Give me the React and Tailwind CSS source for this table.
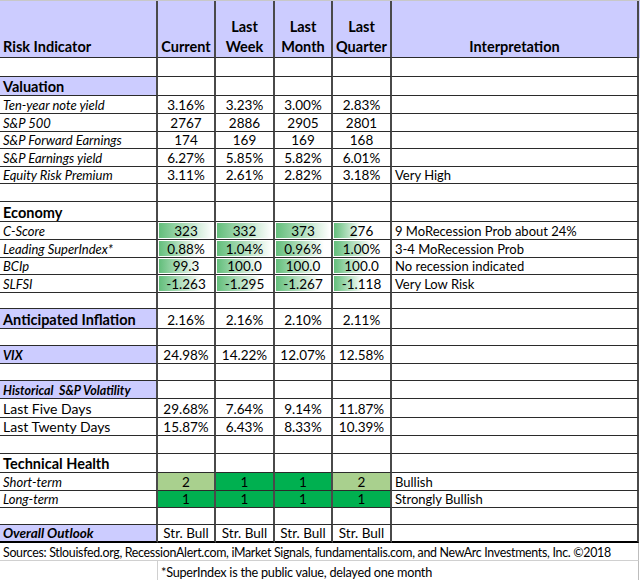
import React from 'react'

// Excel-style dashboard table
const G = '#00b050'
const LG = '#a9d08e'

const rows = [
  { h: 'h-[19px]' },
  { h: 'h-[19px]', label: 'Valuation', kind: 'sec', lav: true },
  { h: 'h-[18px]', label: 'Ten-year note yield', kind: 'it', vals: ['3.16%', '3.23%', '3.00%', '2.83%'] },
  { h: 'h-[18px]', label: 'S&P 500', kind: 'it', vals: ['2767', '2886', '2905', '2801'] },
  { h: 'h-[17px]', label: 'S&P Forward Earnings', kind: 'it', vals: ['174', '169', '169', '168'] },
  { h: 'h-[18px]', label: 'S&P Earnings yield', kind: 'it', vals: ['6.27%', '5.85%', '5.82%', '6.01%'] },
  { h: 'h-[17px]', label: 'Equity Risk Premium', kind: 'it', vals: ['3.11%', '2.61%', '2.82%', '3.18%'], note: 'Very High' },
  { h: 'h-[18px]' },
  { h: 'h-[20px]', label: 'Economy', kind: 'sec' },
  { h: 'h-[18px]', label: 'C-Score', kind: 'it', vals: ['323', '332', '373', '276'], bars: [100, 100, 100, 50], note: '9 MoRecession Prob about 24%' },
  { h: 'h-[18px]', label: 'Leading SuperIndex*', kind: 'it', vals: ['0.88%', '1.04%', '0.96%', '1.00%'], bars: [75, 100, 90, 70], note: '3-4 MoRecession Prob' },
  { h: 'h-[17px]', label: 'BCIp', kind: 'it', vals: ['99.3', '100.0', '100.0', '100.0'], bars: [75, 80, 80, 60], note: 'No recession indicated' },
  { h: 'h-[18px]', label: 'SLFSI', kind: 'it', vals: ['-1.263', '-1.295', '-1.267', '-1.118'], bars: [80, 80, 80, 55], note: 'Very Low Risk' },
  { h: 'h-[16px]' },
  { h: 'h-[20px]', label: 'Anticipated Inflation', kind: 'sec', lav: true, vals: ['2.16%', '2.16%', '2.10%', '2.11%'] },
  { h: 'h-[17px]' },
  { h: 'h-[18px]', label: 'VIX', kind: 'bi', lav: true, vals: ['24.98%', '14.22%', '12.07%', '12.58%'] },
  { h: 'h-[17px]' },
  { h: 'h-[18px]', label: 'Historical  S&P Volatility', kind: 'bi', lav: true },
  { h: 'h-[19px]', label: 'Last Five Days', kind: 'plain', vals: ['29.68%', '7.64%', '9.14%', '11.87%'] },
  { h: 'h-[18px]', label: 'Last Twenty Days', kind: 'plain', vals: ['15.87%', '6.43%', '8.33%', '10.39%'] },
  { h: 'h-[18px]' },
  { h: 'h-[19px]', label: 'Technical Health', kind: 'sec' },
  { h: 'h-[18px]', label: 'Short-term', kind: 'it', vals: ['2', '1', '1', '2'], fills: [LG, G, G, LG], note: 'Bullish' },
  { h: 'h-[17px]', label: 'Long-term', kind: 'it', vals: ['1', '1', '1', '1'], fills: [G, G, G, G], note: 'Strongly Bullish' },
  { h: 'h-[17px]' },
  { h: 'h-[18px]', label: 'Overall Outlook', kind: 'ob', lav: true, vals: ['Str. Bull', 'Str. Bull', 'Str. Bull', 'Str. Bull'], last: true },
]

const labelCls = {
  sec: 'font-bold text-[14.5px]',
  it: 'italic text-[13px]',
  bi: 'font-bold italic text-[12.5px]',
  plain: 'text-[14px]',
  ob: 'font-bold italic text-[13.5px]',
}

const valW = ['w-[58px]', 'w-[59px]', 'w-[58px]', 'w-[59px]']

function Row({ r }) {
  const line = r.last ? 'border-b-2 border-b-black' : 'border-b border-b-[#2b2b2b]'
  return (
    <div className={`flex ${r.h}`}>
      <div className={`w-[158px] shrink-0 flex items-end pl-[3px] pb-[1px] leading-none whitespace-pre border-r-2 border-r-[#4a4a4a] ${line} ${r.lav ? 'bg-[#ccccff]' : ''} ${labelCls[r.kind] || ''}`}>
        {r.label}
      </div>
      {valW.map((w, i) => (
        <div key={i} className={`${w} shrink-0 relative border-r-2 border-r-[#4a4a4a] ${line}`} style={r.fills ? { background: r.fills[i] } : undefined}>
          {r.bars && (
            <div className="absolute left-[1px] top-[1px] bottom-[1px]" style={{ width: `calc(${r.bars[i]}% - 2px)`, background: 'linear-gradient(to right, #63be7b, #ffffff)' }} />
          )}
          <div className="relative h-full flex items-end justify-center pb-[1px] text-[13.5px] leading-none whitespace-nowrap">
            {r.vals ? r.vals[i] : ''}
          </div>
        </div>
      ))}
      <div className={`w-[247px] shrink-0 flex items-end pl-[3px] pb-[1px] text-[13px] leading-none border-r-2 border-r-[#4a4a4a] ${line}`}>
        {r.note}
      </div>
    </div>
  )
}

export default function App() {
  return (
    <div className="w-[640px] h-[580px] bg-white text-black font-[Lato,sans-serif] border-t border-t-[#c8c8c8] overflow-hidden">
      <div className="flex h-[57px] bg-[#ccccff] font-bold text-[14.5px] leading-[20px]">
        <div className="w-[158px] shrink-0 flex items-end pl-[3px] border-r-2 border-r-[#4a4a4a] border-b border-b-[#2b2b2b]">Risk Indicator</div>
        <div className="w-[58px] shrink-0 flex items-end justify-center border-r-2 border-r-[#4a4a4a] border-b border-b-[#2b2b2b]">Current</div>
        <div className="w-[59px] shrink-0 flex items-end justify-center text-center border-r-2 border-r-[#4a4a4a] border-b border-b-[#2b2b2b]">Last<br />Week</div>
        <div className="w-[58px] shrink-0 flex items-end justify-center text-center border-r-2 border-r-[#4a4a4a] border-b border-b-[#2b2b2b]">Last<br />Month</div>
        <div className="w-[59px] shrink-0 flex items-end justify-center text-center border-r-2 border-r-[#4a4a4a] border-b border-b-[#2b2b2b]">Last<br />Quarter</div>
        <div className="w-[247px] shrink-0 flex items-end justify-center border-r-2 border-r-[#4a4a4a] border-b border-b-[#2b2b2b]">Interpretation</div>
      </div>
      {rows.map((r, i) => <Row key={i} r={r} />)}
      <div className="h-[18px] w-[639px] flex items-end pl-[3px] pb-[1px] text-[12.4px] tracking-[-0.3px] leading-none whitespace-nowrap border-b border-b-[#d0d0d0] border-r border-r-[#bdbdbd]">
        Sources: Stlouisfed.org, RecessionAlert.com, iMarket Signals, fundamentalis.com, and NewArc Investments, Inc. ©2018
      </div>
      <div className="h-[20px] w-[639px] flex border-r border-r-[#bdbdbd]">
        <div className="w-[158px] shrink-0 border-r border-r-[#d0d0d0]" />
        <div className="flex items-end pl-[3px] pb-[2px] text-[12.7px] tracking-[-0.25px] leading-none whitespace-nowrap">*SuperIndex is the public value, delayed one month</div>
      </div>
    </div>
  )
}
